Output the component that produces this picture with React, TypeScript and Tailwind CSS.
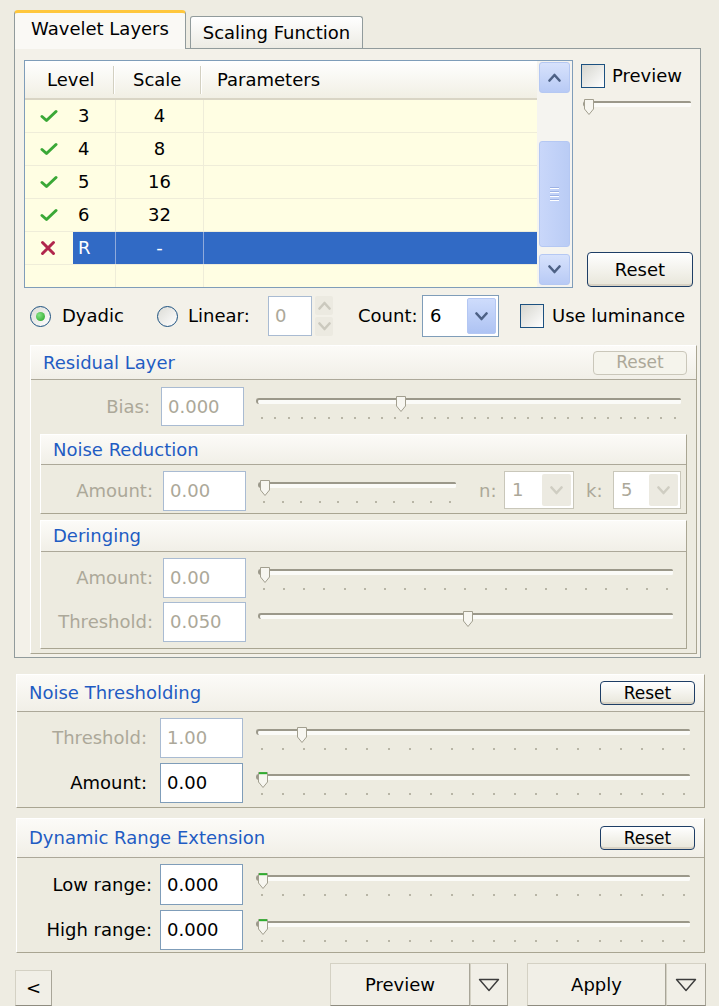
import React from 'react';

type Layer = { level: string; scale: string; on: boolean; selected?: boolean };

const LAYERS: Layer[] = [
  { level: '3', scale: '4', on: true },
  { level: '4', scale: '8', on: true },
  { level: '5', scale: '16', on: true },
  { level: '6', scale: '32', on: true },
  { level: 'R', scale: '-', on: false, selected: true },
];

const Chevron = ({ up, color = '#4D6185' }: { up?: boolean; color?: string }) => (
  <svg width="13" height="9" viewBox="0 0 13 9">
    <polyline
      points={up ? '1.5,7.5 6.5,2 11.5,7.5' : '1.5,1.5 6.5,7 11.5,1.5'}
      fill="none"
      stroke={color}
      strokeWidth="2.6"
      strokeLinecap="round"
      strokeLinejoin="round"
    />
  </svg>
);

const TickMark = () => (
  <svg width="18" height="14" viewBox="0 0 18 14">
    <path d="M2 7.5 L6.5 11.5 L16 2.5" fill="none" stroke="#3AA836" strokeWidth="3" strokeLinecap="round" strokeLinejoin="round" />
  </svg>
);

const CrossMark = () => (
  <svg width="16" height="16" viewBox="0 0 16 16">
    <path d="M2.5 2.5 L13.5 13.5 M13.5 2.5 L2.5 13.5" stroke="#B1264C" strokeWidth="3" strokeLinecap="round" />
  </svg>
);

const DownTriangle = () => (
  <svg width="22" height="14" viewBox="0 0 22 14">
    <polygon points="1.5,1.5 20.5,1.5 11,12.5" fill="none" stroke="#3C3C3C" strokeWidth="1.4" strokeLinejoin="round" />
  </svg>
);

const Thumb = ({ green }: { green?: boolean }) => (
  <svg width="12" height="18" viewBox="0 0 12 18">
    <path d="M1.5 1.5 H10.5 V11 L6 16.5 L1.5 11 Z" fill="#F7F6F0" stroke="#A29F8F" />
    {green && <path d="M2 2.2 H10" stroke="#2FAE2F" strokeWidth="2" />}
  </svg>
);

// trackbar: groove, thumb and the row of tick dots under it
function Slider({ pos, ticks = 0, green, className = '' }: { pos: number; ticks?: number; green?: boolean; className?: string }) {
  return (
    <div className={`relative h-full ${className}`}>
      <div className="absolute left-0 right-0 top-[11px] h-[6px] rounded-l-[4px] rounded-r-[2px] border-l-2 border-t-2 border-[#9B988A] bg-[#FBFBF8]" />
      {ticks > 0 && (
        <div className="absolute left-[5px] right-[5px] top-[30px] flex justify-between">
          {Array.from({ length: ticks }, (_, i) => (
            <span key={i} className="h-[2px] w-[2px] bg-[#B8B5A6]" />
          ))}
        </div>
      )}
      <div className="absolute top-[8px]" style={{ left: pos }}>
        <Thumb green={green} />
      </div>
    </div>
  );
}

function Field({ value, enabled, className = 'w-[84px]' }: { value: string; enabled?: boolean; className?: string }) {
  return (
    <div
      className={`flex h-full items-center border bg-white pl-[6px] ${
        enabled ? 'border-[#7F9DB9] text-black' : 'border-[#A9BBD2] text-[#ACA899]'
      } ${className}`}
    >
      {value}
    </div>
  );
}

function Combo({ value, disabled, className }: { value: string; disabled?: boolean; className: string }) {
  return (
    <div className={`flex items-stretch border bg-white ${disabled ? 'border-[#C9C7BA]' : 'border-[#7F9DB9]'} ${className}`}>
      <span className={`flex flex-1 items-center pl-[7px] ${disabled ? 'text-[#ACA899]' : ''}`}>{value}</span>
      <span
        className={`m-[2px] flex w-[29px] items-center justify-center rounded-[2px] ${
          disabled ? 'bg-[#ECEAE1]' : 'border border-[#B4C7F3] bg-linear-to-b from-[#CEDCFC] to-[#AEC3F3]'
        }`}
      >
        <Chevron color={disabled ? '#CFCDC2' : '#4D6185'} />
      </span>
    </div>
  );
}

function XPButton({ children, disabled, className }: { children: React.ReactNode; disabled?: boolean; className: string }) {
  return (
    <div
      className={`flex items-center justify-center rounded-[4px] border ${
        disabled
          ? 'border-[#CAC7BA] bg-[#F5F4EC] text-[#ACA899]'
          : 'border-[#1E3E66] bg-linear-to-b from-white to-[#E8E6DA] text-black shadow-[inset_0_-2px_0_#D8D2C4]'
      } ${className}`}
    >
      {children}
    </div>
  );
}

const Radio = ({ checked }: { checked?: boolean }) => (
  <span className="flex h-[21px] w-[21px] shrink-0 items-center justify-center rounded-full border border-[#1C5180] bg-linear-to-br from-[#DCDCD6] to-white">
    {checked && <span className="h-[9px] w-[9px] rounded-full bg-[radial-gradient(circle_at_35%_35%,#86E486,#21A121)]" />}
  </span>
);

const CheckBox = () => (
  <span className="block h-[24px] w-[24px] shrink-0 border border-[#1C5180] bg-linear-to-br from-[#D6D6CF] to-white" />
);

function Group({
  title,
  reset,
  headerH,
  className = '',
  children,
}: {
  title: string;
  reset?: React.ReactNode;
  headerH: string;
  className?: string;
  children: React.ReactNode;
}) {
  return (
    <div className={`border border-b-[#A9A592] border-l-white border-r-[#A9A592] border-t-white bg-[#EDEBE0] ${className}`}>
      <div className={`flex items-center justify-between border-b border-[#ACA899] bg-linear-to-b from-[#FCFBF8] to-[#F1EFE7] pl-[12px] pr-[9px] text-[#1F5CC3] ${headerH}`}>
        <span>{title}</span>
        {reset}
      </div>
      {children}
    </div>
  );
}

function ParamRow({
  label,
  value,
  enabled,
  labelW,
  gap,
  height = 'h-[40px]',
  className = '',
  children,
}: {
  label: string;
  value: string;
  enabled?: boolean;
  labelW: string;
  gap: string;
  height?: string;
  className?: string;
  children: React.ReactNode;
}) {
  return (
    <div className={`flex ${height} ${className}`}>
      <span className={`flex items-center justify-end ${labelW} ${enabled ? 'text-black' : 'text-[#ACA899]'}`}>{label}</span>
      <Field value={value} enabled={enabled} className={`${gap} w-[83px]`} />
      {children}
    </div>
  );
}

export default function App() {
  return (
    <div className="h-[1006px] w-[719px] overflow-hidden bg-[#EEECE2] pt-[10px] font-['DejaVu_Sans',sans-serif] text-[18px] leading-none text-black">
      {/* tabs */}
      <div className="ml-[14px] flex h-[38px] items-end">
        <div className="relative z-10 -mb-px flex h-[39px] w-[172px] items-center justify-center rounded-t-[4px] border-x border-t-[3px] border-[#919B9C] border-t-[#FFC73C] bg-[#FAF9F5] pb-[5px]">
          Wavelet Layers
        </div>
        <div className="ml-[4px] flex h-[32px] w-[173px] items-center justify-center rounded-t-[3px] border-x border-t border-[#919B9C] bg-linear-to-b from-white to-[#ECEBE4]">
          Scaling Function
        </div>
      </div>

      <div className="ml-[14px] h-[610px] w-[687px] border border-[#919B9C] bg-[#F3F1E9] pl-[9px] pt-[11px]">
        {/* layer list + preview column */}
        <div className="flex h-[228px]">
          <div className="flex h-[228px] w-[549px] border border-[#7F9DB9] bg-[#FFFEE3]">
            <div className="flex flex-1 flex-col">
              <div className="flex h-[39px] shrink-0 items-center border-b-2 border-[#D9D5C5] bg-linear-to-b from-white to-[#F1EFE4]">
                <div className="w-[88px] pl-[22px]">Level</div>
                <span className="h-[28px] w-[2px] border-l border-r border-l-[#D3D0C1] border-r-white" />
                <div className="w-[85px] pl-[18px]">Scale</div>
                <span className="h-[28px] w-[2px] border-l border-r border-l-[#D3D0C1] border-r-white" />
                <div className="flex-1 pl-[15px]">Parameters</div>
              </div>
              {LAYERS.map((l) => (
                <div key={l.level} className="flex h-[33px] shrink-0 border-b border-[#EFEDD9]">
                  <div className="flex w-[48px] items-center pl-[15px]">{l.on ? <TickMark /> : <CrossMark />}</div>
                  <div className={`flex w-[42px] items-center pl-[5px] ${l.selected ? 'bg-[#316AC5] text-white' : ''}`}>{l.level}</div>
                  <div
                    className={`flex w-[88px] items-center justify-center border-l ${
                      l.selected ? 'border-[#8FAADB] bg-[#316AC5] text-white' : 'border-[#EFEDD9]'
                    }`}
                  >
                    {l.scale}
                  </div>
                  <div className={`flex-1 border-l ${l.selected ? 'border-[#8FAADB] bg-[#316AC5]' : 'border-[#EFEDD9]'}`} />
                </div>
              ))}
              <div className="flex flex-1">
                <div className="w-[90px]" />
                <div className="w-[88px] border-l border-[#EFEDD9]" />
                <div className="flex-1 border-l border-[#EFEDD9]" />
              </div>
            </div>
            {/* scrollbar */}
            <div className="flex w-[35px] flex-col bg-[#F5F4F0] px-[2px] pb-[2px] pt-[1px]">
              <div className="flex h-[31px] items-center justify-center rounded-[3px] border border-[#B5C8F3] bg-linear-to-b from-[#D7E2FC] to-[#B8CAF5]">
                <Chevron up />
              </div>
              <div className="mt-[48px] flex h-[106px] flex-col items-center justify-center gap-[2px] rounded-[3px] border border-[#B5C8F3] bg-linear-to-r from-[#C9D7FA] to-[#BACCF5]">
                {[0, 1, 2, 3].map((i) => (
                  <span key={i} className="h-[2px] w-[9px] border-b border-white bg-[#9DB2E4]" />
                ))}
              </div>
              <div className="mt-auto flex h-[31px] items-center justify-center rounded-[3px] border border-[#B5C8F3] bg-linear-to-b from-[#D7E2FC] to-[#B8CAF5]">
                <Chevron />
              </div>
            </div>
          </div>

          <div className="ml-[8px] flex w-[112px] flex-col">
            <div className="mt-[4px] flex items-center gap-[7px]">
              <CheckBox />
              <span>Preview</span>
            </div>
            <div className="ml-[2px] mt-[2px] h-[30px] w-[108px]">
              <Slider pos={0} />
            </div>
            <XPButton className="mb-[1px] ml-[6px] mt-auto h-[35px] w-[106px]">Reset</XPButton>
          </div>
        </div>

        {/* scale options */}
        <div className="mt-[7px] flex h-[42px] items-center">
          <span className="ml-[6px]">
            <Radio checked />
          </span>
          <span className="ml-[11px] w-[95px]">Dyadic</span>
          <Radio />
          <span className="ml-[10px] w-[80px]">Linear:</span>
          <div className="flex h-[40px] w-[44px] items-center border border-[#A9BBD2] bg-white pl-[6px] text-[#ACA899]">0</div>
          <div className="ml-[3px] flex h-[40px] w-[18px] flex-col gap-[2px]">
            <span className="flex flex-1 items-center justify-center rounded-[2px] bg-[#ECEAE1]">
              <Chevron up color="#CBC9BE" />
            </span>
            <span className="flex flex-1 items-center justify-center rounded-[2px] bg-[#ECEAE1]">
              <Chevron color="#CBC9BE" />
            </span>
          </div>
          <span className="ml-[25px] w-[64px]">Count:</span>
          <Combo value="6" className="h-[42px] w-[77px]" />
          <span className="ml-[21px]">
            <CheckBox />
          </span>
          <span className="ml-[8px]">Use luminance</span>
        </div>

        {/* residual layer */}
        <Group
          title="Residual Layer"
          headerH="h-[34px]"
          className="ml-[6px] mt-[8px] w-[667px] pb-[4px]"
          reset={
            <XPButton disabled className="h-[24px] w-[94px] text-[17px]">
              Reset
            </XPButton>
          }
        >
          <ParamRow label="Bias:" value="0.000" labelW="w-[119px]" gap="ml-[11px]" height="h-[39px]" className="mt-[7px]">
            <Slider pos={139} ticks={32} className="ml-[12px] mr-[15px] flex-1" />
          </ParamRow>

          <Group title="Noise Reduction" headerH="h-[30px]" className="ml-[9px] mt-[8px] w-[647px] pb-[2px]">
            <ParamRow label="Amount:" value="0.00" labelW="w-[112px]" gap="ml-[10px]" className="mt-[6px]">
              <Slider pos={1} ticks={11} className="ml-[12px] w-[198px]" />
              <span className="ml-[23px] flex w-[25px] items-center text-[#ACA899]">n:</span>
              <Combo value="1" disabled className="h-[38px] w-[70px]" />
              <span className="ml-[12px] flex w-[27px] items-center text-[#ACA899]">k:</span>
              <Combo value="5" disabled className="h-[38px] w-[68px]" />
            </ParamRow>
          </Group>

          <Group title="Deringing" headerH="h-[31px]" className="ml-[9px] mt-[6px] w-[647px] pb-[6px]">
            <ParamRow label="Amount:" value="0.00" labelW="w-[112px]" gap="ml-[10px]" className="mt-[6px]">
              <Slider pos={1} ticks={21} className="ml-[12px] w-[415px]" />
            </ParamRow>
            <ParamRow label="Threshold:" value="0.050" labelW="w-[112px]" gap="ml-[10px]" className="mt-[4px]">
              <Slider pos={204} className="ml-[12px] w-[415px]" />
            </ParamRow>
          </Group>
        </Group>
      </div>

      {/* noise thresholding */}
      <Group
        title="Noise Thresholding"
        headerH="h-[37px]"
        className="ml-[16px] mt-[16px] w-[689px] pb-[4px]"
        reset={<XPButton className="h-[24px] w-[95px] text-[17px]">Reset</XPButton>}
      >
        <ParamRow label="Threshold:" value="1.00" labelW="w-[130px]" gap="ml-[13px]" className="mt-[6px]">
          <Slider pos={40} ticks={21} className="ml-[13px] mr-[14px] flex-1" />
        </ParamRow>
        <ParamRow label="Amount:" value="0.00" enabled labelW="w-[130px]" gap="ml-[13px]" className="mt-[5px]">
          <Slider pos={1} ticks={21} green className="ml-[13px] mr-[14px] flex-1" />
        </ParamRow>
      </Group>

      {/* dynamic range extension */}
      <Group
        title="Dynamic Range Extension"
        headerH="h-[39px]"
        className="ml-[16px] mt-[10px] w-[689px] pb-[2px]"
        reset={<XPButton className="h-[24px] w-[95px] text-[17px]">Reset</XPButton>}
      >
        <ParamRow label="Low range:" value="0.000" enabled labelW="w-[135px]" gap="ml-[8px]" height="h-[41px]" className="mt-[6px]">
          <Slider pos={1} ticks={21} green className="ml-[13px] mr-[14px] flex-1" />
        </ParamRow>
        <ParamRow label="High range:" value="0.000" enabled labelW="w-[135px]" gap="ml-[8px]" className="mt-[5px]">
          <Slider pos={1} ticks={21} green className="ml-[13px] mr-[14px] flex-1" />
        </ParamRow>
      </Group>

      {/* footer buttons */}
      <div className="mt-[10px] flex h-[43px] items-start">
        <div className="ml-[15px] mt-[7px] flex h-[36px] w-[37px] items-center justify-center border border-[#D4D1C4] border-b-[#8F8C80] border-r-[#A8A598] bg-[#F1EFE7]">
          &lt;
        </div>
        <div className="ml-[278px] flex h-[43px] w-[140px] items-center justify-center border border-[#D4D1C4] border-b-[#8F8C80] border-r-[#A8A598] bg-[#F1EFE7]">
          Preview
        </div>
        <div className="flex h-[43px] w-[38px] items-center justify-center border border-[#D4D1C4] border-b-[#8F8C80] border-r-[#A8A598] bg-[#F1EFE7]">
          <DownTriangle />
        </div>
        <div className="ml-[19px] flex h-[43px] w-[139px] items-center justify-center border border-[#D4D1C4] border-b-[#8F8C80] border-r-[#A8A598] bg-[#F1EFE7]">
          Apply
        </div>
        <div className="flex h-[43px] w-[40px] items-center justify-center border border-[#D4D1C4] border-b-[#8F8C80] border-r-[#A8A598] bg-[#F1EFE7]">
          <DownTriangle />
        </div>
      </div>
    </div>
  );
}
